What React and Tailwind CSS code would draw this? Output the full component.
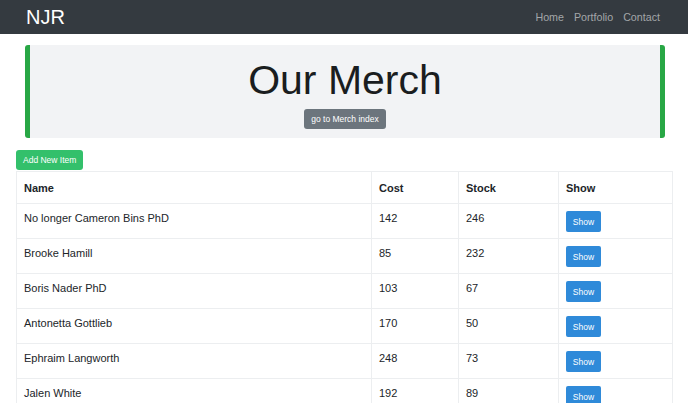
import React from 'react';

const items = [
  { name: 'No longer Cameron Bins PhD', cost: 142, stock: 246 },
  { name: 'Brooke Hamill', cost: 85, stock: 232 },
  { name: 'Boris Nader PhD', cost: 103, stock: 67 },
  { name: 'Antonetta Gottlieb', cost: 170, stock: 50 },
  { name: 'Ephraim Langworth', cost: 248, stock: 73 },
  { name: 'Jalen White', cost: 192, stock: 89 },
];

function App() {
  return (
    <div className="min-h-screen bg-white text-[#212529] font-['Liberation_Sans',Arial,sans-serif]">
      {/* Navbar */}
      <nav className="h-[34px] bg-[#343a40] flex items-center justify-between pl-[26px] pr-[28px]">
        <span className="text-white text-[20px] leading-none">NJR</span>
        <div className="flex items-center gap-[10px] text-[10.7px] text-[#a3a6a9]">
          <span>Home</span>
          <span>Portfolio</span>
          <span>Contact</span>
        </div>
      </nav>

      {/* Jumbotron */}
      <div className="ml-[25px] mr-[23px] mt-[11px] h-[93px] bg-[#f2f3f5] border-x-[5px] border-[#28a745] rounded-[3px] flex flex-col items-center">
        <h1 className="text-[41px] leading-none mt-[15px] text-[#1a1d20]">Our Merch</h1>
        <button className="mt-[8px] h-[20px] px-[7px] bg-[#6c757d] text-white text-[8.5px] rounded-[3px]">
          go to Merch index
        </button>
      </div>

      {/* Add button + table */}
      <div className="px-[16px] mt-[12px] flex flex-col items-start">
        <button className="h-[20px] px-[7px] bg-[#33c06b] text-white text-[8.5px] rounded-[3px]">
          Add New Item
        </button>
        <table className="w-[657px] border-collapse text-[11px] leading-[16px] mt-px">
          <thead>
            <tr>
              <th className="w-[355px] border border-[#eceef0] text-left font-bold px-[7px] h-[32px]">Name</th>
              <th className="w-[87px] border border-[#eceef0] text-left font-bold px-[7px]">Cost</th>
              <th className="w-[100px] border border-[#eceef0] text-left font-bold px-[7px]">Stock</th>
              <th className="border border-[#eceef0] text-left font-bold px-[7px]">Show</th>
            </tr>
          </thead>
          <tbody>
            {items.map((it, idx) => (
              <tr key={idx}>
                <td className="border border-[#eceef0] align-top px-[7px] pt-[6px]">{it.name}</td>
                <td className="border border-[#eceef0] align-top px-[7px] pt-[6px]">{it.cost}</td>
                <td className="border border-[#eceef0] align-top px-[7px] pt-[6px]">{it.stock}</td>
                <td className="border border-[#eceef0] align-top px-[7px] pt-[7px] pb-[6px]">
                  <button className="h-[21px] w-[35px] bg-[#2f8ad9] text-white text-[8.5px] rounded-[2px] block">
                    Show
                  </button>
                </td>
              </tr>
            ))}
          </tbody>
        </table>
      </div>
    </div>
  );
}

export default App;
